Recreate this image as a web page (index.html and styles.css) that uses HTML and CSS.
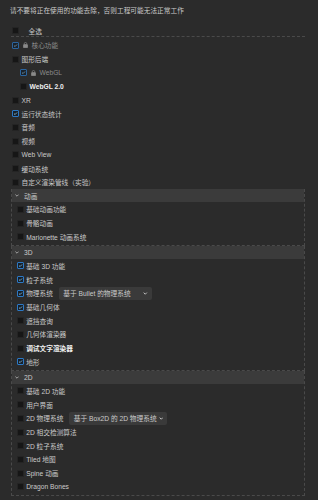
FILE: index.html
```html
<!DOCTYPE html>
<html lang="zh-CN">
<head>
  <meta charset="UTF-8" />
  <meta name="viewport" content="width=device-width, initial-scale=1.0"/>
  <title>功能裁剪</title>
  <link rel="stylesheet" href="styles.css">
</head>
<body>
  <p class="tip">请不要将正在使用的功能去除，否则工程可能无法正常工作</p>

  <div class="select-all">
    <span class="cb"></span>
    <span>全选</span>
  </div>

  <div class="modules">
    <div class="row locked">
      <span class="cb on"><svg viewBox="0 0 8 8"><path d="M1.6 4.1 3.3 5.7 6.4 2.4"/></svg></span>
      <svg class="lock" viewBox="0 0 5 6"><path d="M1.2 2.6V1.8a1.3 1.3 0 0 1 2.6 0v0.8" /><rect x="0.5" y="2.6" width="4" height="3.2" rx="0.4"/></svg>
      <span>核心功能</span>
    </div>
    <div class="row">
      <span class="cb"></span>
      <span>图形后端</span>
    </div>
    <div class="row sub locked">
      <span class="cb on"><svg viewBox="0 0 8 8"><path d="M1.6 4.1 3.3 5.7 6.4 2.4"/></svg></span>
      <svg class="lock" viewBox="0 0 5 6"><path d="M1.2 2.6V1.8a1.3 1.3 0 0 1 2.6 0v0.8" /><rect x="0.5" y="2.6" width="4" height="3.2" rx="0.4"/></svg>
      <span>WebGL</span>
    </div>
    <div class="row sub">
      <span class="cb"></span>
      <span class="strong">WebGL 2.0</span>
    </div>
    <div class="row"><span class="cb"></span><span>XR</span></div>
    <div class="row">
      <span class="cb on"><svg viewBox="0 0 8 8"><path d="M1.6 4.1 3.3 5.7 6.4 2.4"/></svg></span>
      <span>运行状态统计</span>
    </div>
    <div class="row"><span class="cb"></span><span>音频</span></div>
    <div class="row"><span class="cb"></span><span>视频</span></div>
    <div class="row"><span class="cb"></span><span>Web View</span></div>
    <div class="row"><span class="cb"></span><span>缓动系统</span></div>
    <div class="row"><span class="cb"></span><span>自定义渲染管线（实验）</span></div>

    <div class="group">
      <div class="group-head">
        <svg class="fold" viewBox="0 0 4 3"><path d="M0.4 0.6 2 2.2 3.6 0.6"/></svg>
        <span>动画</span>
      </div>
      <div class="group-body">
        <div class="row"><span class="cb"></span><span>基础动画功能</span></div>
        <div class="row"><span class="cb"></span><span>骨骼动画</span></div>
        <div class="row"><span class="cb"></span><span>Marionette 动画系统</span></div>
      </div>
    </div>

    <div class="group">
      <div class="group-head">
        <svg class="fold" viewBox="0 0 4 3"><path d="M0.4 0.6 2 2.2 3.6 0.6"/></svg>
        <span>3D</span>
      </div>
      <div class="group-body">
        <div class="row">
          <span class="cb on"><svg viewBox="0 0 8 8"><path d="M1.6 4.1 3.3 5.7 6.4 2.4"/></svg></span>
          <span>基础 3D 功能</span>
        </div>
        <div class="row">
          <span class="cb on"><svg viewBox="0 0 8 8"><path d="M1.6 4.1 3.3 5.7 6.4 2.4"/></svg></span>
          <span>粒子系统</span>
        </div>
        <div class="row">
          <span class="cb on"><svg viewBox="0 0 8 8"><path d="M1.6 4.1 3.3 5.7 6.4 2.4"/></svg></span>
          <span>物理系统</span>
          <div class="dropdown">
            <span>基于 Bullet 的物理系统</span>
            <svg viewBox="0 0 4 3"><path d="M0.4 0.6 2 2.2 3.6 0.6"/></svg>
          </div>
        </div>
        <div class="row">
          <span class="cb on"><svg viewBox="0 0 8 8"><path d="M1.6 4.1 3.3 5.7 6.4 2.4"/></svg></span>
          <span>基础几何体</span>
        </div>
        <div class="row"><span class="cb"></span><span>遮挡查询</span></div>
        <div class="row"><span class="cb"></span><span>几何体渲染器</span></div>
        <div class="row"><span class="cb"></span><span class="strong">调试文字渲染器</span></div>
        <div class="row">
          <span class="cb on"><svg viewBox="0 0 8 8"><path d="M1.6 4.1 3.3 5.7 6.4 2.4"/></svg></span>
          <span>地形</span>
        </div>
      </div>
    </div>

    <div class="group">
      <div class="group-head">
        <svg class="fold" viewBox="0 0 4 3"><path d="M0.4 0.6 2 2.2 3.6 0.6"/></svg>
        <span>2D</span>
      </div>
      <div class="group-body">
        <div class="row"><span class="cb"></span><span>基础 2D 功能</span></div>
        <div class="row"><span class="cb"></span><span>用户界面</span></div>
        <div class="row">
          <span class="cb"></span>
          <span>2D 物理系统</span>
          <div class="dropdown">
            <span>基于 Box2D 的 2D 物理系统</span>
            <svg viewBox="0 0 4 3"><path d="M0.4 0.6 2 2.2 3.6 0.6"/></svg>
          </div>
        </div>
        <div class="row"><span class="cb"></span><span>2D 相交检测算法</span></div>
        <div class="row"><span class="cb"></span><span>2D 粒子系统</span></div>
        <div class="row"><span class="cb"></span><span>Tiled 地图</span></div>
        <div class="row"><span class="cb"></span><span>Spine 动画</span></div>
        <div class="row"><span class="cb"></span><span>Dragon Bones</span></div>
      </div>
    </div>
  </div>
</body>
</html>
```

FILE: styles.css
```css
body {
  margin: 0;
  background: #2b2b2b;
  color: #cacaca;
  font-family: "Liberation Sans", "Noto Sans CJK SC", sans-serif;
  font-size: 6.7px;
}

.tip {
  margin: 0;
  padding: 4px 0 0 10px;
  line-height: 14px;
}

.select-all {
  display: flex;
  align-items: center;
  gap: 9.5px;
  height: 11px;
  margin: 7px 13px 0 11px;
  padding-left: 1px;
  border-bottom: 1px dashed #4a4a4a;
}

.modules {
  margin: 0 13px 0 11px;
  padding-top: 1.5px;
}

.row {
  display: flex;
  align-items: center;
  gap: 2.5px;
  height: 13.7px;
  padding-left: 1px;
  white-space: nowrap;
}

.row.sub {
  padding-left: 9px;
}

.locked {
  color: #8a8a8a;
}

.locked .cb {
  opacity: 0.75;
}

.strong {
  color: #f0f0f0;
  font-weight: bold;
}

/* checkbox */
.cb {
  box-sizing: border-box;
  width: 7px;
  height: 7px;
  flex-shrink: 0;
  border: 1px solid #242424;
  border-radius: 1px;
  background: #161616;
  display: flex;
  align-items: center;
  justify-content: center;
}

.cb.on {
  border-color: #2c78c4;
  background: #15202b;
}

.cb svg {
  width: 7px;
  height: 7px;
  fill: none;
  stroke: #a5e1ff;
  stroke-width: 1.1;
}

.lock {
  width: 5px;
  height: 6px;
  margin: 0 1px 0 1.5px;
  fill: #8a8a8a;
  stroke: #8a8a8a;
  stroke-width: 0.7;
}

.lock path {
  fill: none;
}

/* groups */
.group {
  border: 1px dashed #4a4a4a;
  border-top: none;
  padding-bottom: 1px;
}

.group-head {
  display: flex;
  align-items: center;
  gap: 5px;
  height: 13px;
  padding-left: 3px;
  background: #3b3b3b;
}

.fold {
  width: 4px;
  height: 3px;
  fill: none;
  stroke: #bdbdbd;
  stroke-width: 0.8;
}

.group-body {
  padding: 0.5px 0 0 3.7px;
}

.dropdown {
  display: flex;
  align-items: center;
  gap: 2px;
  box-sizing: border-box;
  min-width: 93px;
  height: 13px;
  margin-left: 3.5px;
  padding: 0 4px 0 4.4px;
  border-radius: 2px;
  background: #3a3a3a;
  color: #cacaca;
}

.dropdown svg {
  width: 4.5px;
  height: 3px;
  margin-left: auto;
  fill: none;
  stroke: #d0d0d0;
  stroke-width: 0.9;
}
```
